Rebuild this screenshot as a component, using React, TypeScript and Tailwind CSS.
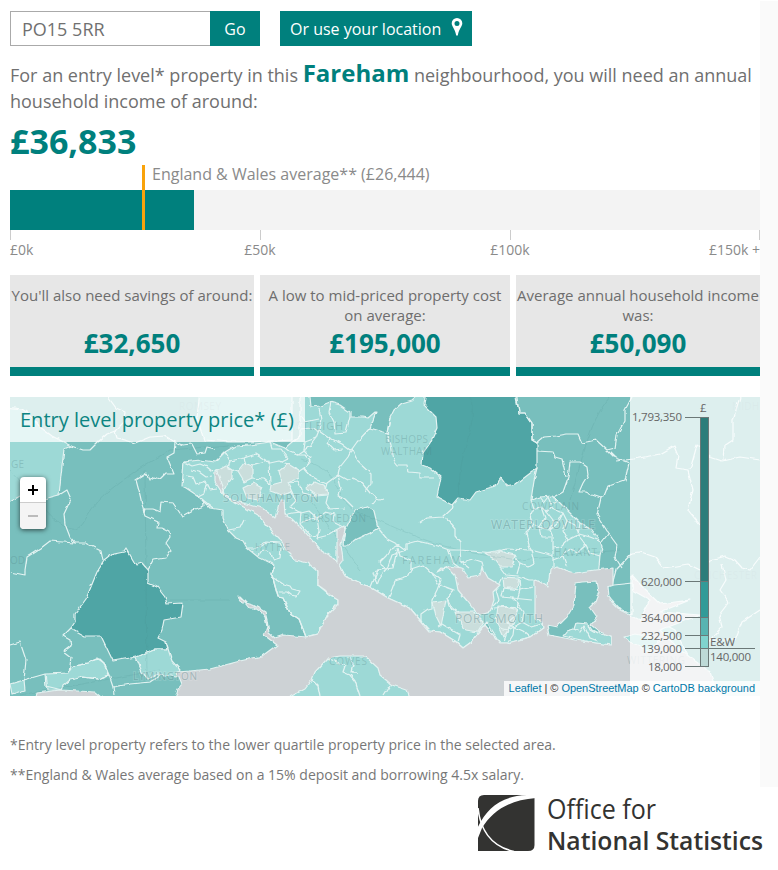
import React from "react";

const MID = "#78bfbd";
const LIGHT = "#9dd9d6";
const DARK = "#4fa5a5";
const SEA = "#cdd2d5";
const PALE = "#cadedc";

type Shape = { fill: string; points: string };

const land: Shape[] = [
  { fill: LIGHT, points: "5,505 20,496 40,500 59,495 61,475 64,449 71,446 52,436 40,427 30,415 22,409 5,407" },
  { fill: LIGHT, points: "300,390 310,397 311,407 320,406 330,402 340,405 350,412 350,417 363,417 368,418 375,412 376,412 370,428 387,433 390,418 394,410 402,403 412,400 424,390 450,390 450,470 537,468 534,480 531,500 540,497 552,496 555,498 565,508 580,523 592,530 600,540 602,548 600,555 598,578 540,590 543,628 530,637 508,643 500,643 487,622 470,643 463,648 455,641 440,632 429,631 410,608 388,598 370,587 345,576 338,565 318,572 318,585 330,595 338,600 338,604 327,616 318,634 306,637 299,619 290,613 283,598 278,597 272,575 275,565 258,557 247,548 243,541 236,538 228,530 223,518 223,510 210,508 198,496 186,488 182,486 184,462 200,460 215,462 225,452 235,446 250,445 270,442 285,448 292,442 300,436" },
  { fill: LIGHT, points: "204,440 197,418 200,390 292,390 292,440 275,441 250,442 230,442" },
  { fill: DARK, points: "426,390 424,405 436,417 437,428 430,443 423,453 422,465 430,468 441,477 437,497 452,505 458,498 470,500 476,492 495,486 501,478 507,486 516,484 537,468 537,443 532,440 532,423 525,413 519,413 516,390" },
  { fill: DARK, points: "126,548 136,565 142,563 148,570 148,583 157,587 165,597 167,604 183,603 181,617 164,620 162,630 158,638 166,642 168,649 155,649 136,657 113,661 101,636 85,636 71,628 75,622 75,614 86,599 97,572 104,561 114,553 124,551" },
  { fill: MID, points: "343,545 345,530 349,522 355,510 366,506 374,511 378,528 370,533 357,539 349,545" },
  { fill: LIGHT, points: "136,657 155,649 168,649 172,661 180,670 176,677 165,675 158,674 148,679 142,672" },
  { fill: LIGHT, points: "46,674 68,673 73,666 88,663 97,658 104,663 109,675 98,679 84,677 70,680 63,686 61,690 48,690" },
  { fill: LIGHT, points: "10,684 24,680 25,690 12,694" },
  { fill: LIGHT, points: "630,627 650,617 675,630 690,660 720,696 690,680 660,665 640,655" },
];

const water: Shape[] = [
  { fill: SEA, points: "174,702 178,689 182,684 177,672 190,671 210,669 240,661 262,656 277,645 264,635 267,627 265,617 261,612 255,608 249,608 245,603 242,603 238,597 240,597 246,603 253,605 260,609 265,612 267,620 269,633 275,638 284,635 306,637 318,634 327,616 338,604 338,600 330,595 325,590 318,585 318,572 308,563 295,560 287,552 282,542 272,532 258,515 240,505 225,497 215,482 215,470 219,476 224,494 232,500 250,505 262,508 275,518 280,500 284,500 285,515 292,519 305,532 320,550 333,558 337,562 337,543 337,530 344,526 345,530 341,545 343,560 339,565 345,576 370,587 388,598 410,608 429,631 440,632 455,641 463,648 470,643 485,625 500,643 508,643 530,637 543,628 542,622 535,618 535,580 540,582 548,587 550,570 557,567 565,570 575,573 595,570 613,568 613,584 610,600 620,610 640,620 650,600 632,590 632,575 645,590 660,604 690,600 660,612 700,615 660,630 680,650 710,672 720,702" },
  { fill: SEA, points: "437,572 441,568 449,569 455,575 458,590 468,602 474,610 480,615 490,612 494,600 493,592 500,585 488,578 482,567 480,575 468,577 462,568 450,566" },
  { fill: SEA, points: "35,702 37,693 60,690 95,692 107,702" },
];

const islands: Shape[] = [
  { fill: LIGHT, points: "280,702 305,689 312,680 315,672 328,658 340,656 365,656 378,668 380,675 392,685 407,690 412,702" },
  { fill: MID, points: "576,583 582,582 597,581 599,592 595,602 590,607 597,617 591,625 600,632 611,636 611,645 575,640 549,635 547,625 557,627 567,617 574,605" },
  { fill: LIGHT, points: "563,636 567,631 574,629 576,623 588,624 592,630 600,634 611,636 611,645 590,642" },
  { fill: MID, points: "608,587 614,585 632,583 632,614 621,610 612,600 609,596" },
  { fill: LIGHT, points: "624,637 635,634 660,640 650,652 630,642" },
];

const pale: Shape[] = [
  { fill: PALE, points: "217,471 226,466 232,470 232,478 225,488 222,493 217,482" },
  { fill: PALE, points: "238,472 245,463 252,466 252,478 244,482" },
  { fill: PALE, points: "279,471 288,464 298,470 298,478 288,483 292,492 282,495 270,491 271,485 282,482" },
  { fill: PALE, points: "306,488 314,482 324,485 328,494 316,495" },
  { fill: PALE, points: "243,488 253,483 262,488 258,500 247,498" },
  { fill: PALE, points: "433,603 446,601 441,626 436,616" },
  { fill: PALE, points: "485,553 500,550 506,553 515,555 512,567 500,567 495,560" },
  { fill: PALE, points: "455,612 474,612 484,622 478,632 466,630 458,619" },
  { fill: PALE, points: "503,577 519,578 517,588 504,588" },
  { fill: PALE, points: "498,606 518,608 513,624 503,637 496,622" },
];

const borders = [
  "71,446 83,450 90,450 98,442 107,434 115,431 117,438 125,440 135,443 150,437 165,436 175,442 174,453 167,457 174,474 165,474 160,479 155,477 150,480 147,473 136,480 140,495 144,513",
  "175,442 182,445 192,444 197,454 205,453 207,447 215,449",
  "108,397 116,408 125,412 124,422 115,431",
  "144,513 145,509 152,509 160,512 161,502 173,503 182,516 193,510 204,506 203,500 213,508",
  "144,513 145,516 158,522 157,528 163,528 169,531 170,537 166,543 171,550 166,558 153,560 148,570",
  "59,495 67,490 71,499 64,514 65,524 70,537 75,543 50,541 41,548 27,557 25,570 25,575 10,572",
  "75,543 85,543 101,551 103,561",
  "10,645 20,642 26,660 24,680 45,674 46,686 62,690",
  "71,628 63,636 70,640 71,646 63,652 71,658 69,673",
  "73,666 80,665 88,663 93,660 100,659 104,663 108,675 98,679 82,677",
  "109,675 113,687 130,684 150,682 160,675",
  "113,687 114,694",
  "275,565 272,575 278,597 283,598 290,613 299,619 306,637",
  "271,577 277,580 283,584 290,586 292,589 300,591 297,596 291,595 287,592 279,592",
  "258,557 263,550 271,553 273,560 280,558 281,548",
  "247,548 256,548 265,542 280,543 284,550",
  "228,530 240,528 244,520",
  "184,462 192,466 200,464 207,467 213,472",
  "186,476 193,477 196,484 205,481 209,489 217,488",
  "190,470 199,472 206,477 212,476",
  "198,496 204,493 206,485",
  "225,452 230,461 244,458 256,454 270,463 279,461 288,464",
  "230,461 228,469 238,472",
  "244,458 246,464",
  "270,442 272,449 281,449 288,458 280,462",
  "252,466 269,461 270,484",
  "252,478 264,479 270,484",
  "285,448 290,452 297,455 310,446 316,438 319,430 321,419 319,408",
  "297,455 305,455 310,461 304,468 298,472",
  "300,415 305,422 319,419",
  "300,429 312,428 319,432",
  "331,402 329,412 334,422 335,433 346,432 350,417",
  "319,430 330,438 342,444 350,450 352,449 357,442 370,428",
  "316,438 305,442 304,450 312,458",
  "330,438 328,444 334,450 343,449",
  "352,449 348,457 340,467 338,475 327,483 325,490",
  "352,449 358,462 371,474 371,483 365,491",
  "338,475 347,480 353,478 361,482 370,493 377,499 373,504",
  "338,475 341,488 338,495 345,499 353,507",
  "304,468 312,477 317,480 327,484",
  "288,483 298,482 303,493 316,496 328,495",
  "292,492 296,501 290,507 301,513 309,511 317,518",
  "284,515 293,513 301,512 300,524 311,536 318,535",
  "300,524 309,519 317,518 319,531 317,538",
  "317,518 326,512 334,514 333,522 345,528",
  "328,495 326,503 330,509 345,508",
  "317,538 329,535 337,530",
  "390,418 387,433 391,445 394,460 398,465 407,465 408,472 420,473 420,478 434,478",
  "376,499 380,500 383,499",
  "378,528 387,539 399,545 406,550",
  "406,550 406,544 417,541 430,544 438,546 449,550 460,550",
  "420,523 427,518 443,517 453,508 452,505",
  "443,517 450,522 455,528 455,536 460,542 460,550 495,553 506,549 531,550 553,556",
  "399,545 390,550 386,556 380,562 385,569 373,572 377,585",
  "377,585 380,577 388,567 392,555 406,550",
  "371,587 378,570 393,568 397,550",
  "388,598 392,589 395,581 407,577 411,569 411,560 400,556 398,548",
  "411,569 423,565 432,573 441,580 437,590 432,600 432,608 428,609 421,614 421,622 429,630",
  "432,573 438,584 454,590 447,598 453,610",
  "438,626 442,624 460,635 458,642",
  "447,598 449,606 458,612",
  "460,550 461,562 469,568",
  "449,550 453,563 460,568",
  "461,562 473,559 482,562 484,570",
  "531,500 534,508 530,516 533,526 526,532 528,542 531,550",
  "534,508 541,507 546,511 552,508 563,513 558,523 550,530 542,529 535,525",
  "540,497 544,502 548,497 551,504 556,502 555,498",
  "541,507 545,518 540,527 542,537 553,537",
  "546,511 553,520 550,530 553,537 553,556 553,568",
  "563,513 567,521 563,531 568,540 578,535 580,523",
  "567,521 575,525 579,534 590,537 600,541",
  "568,540 561,547 553,548",
  "578,535 586,545 590,553 600,556",
  "586,545 578,552 570,549 563,556 567,567",
  "563,556 553,560",
  "500,567 506,575 518,576 529,580 534,580",
  "515,555 520,564 527,567 534,563 531,550",
  "520,564 517,574",
  "502,577 496,590 499,600 493,606",
  "503,588 520,590 533,587",
  "503,588 501,597 512,598 518,604 516,615",
  "519,578 520,590 517,600",
  "512,598 532,600",
  "518,604 524,612 522,622 531,627 542,624",
  "516,615 507,623 514,627 522,622",
  "495,618 500,628 508,630 514,627 513,635 508,643",
  "508,630 504,641",
  "514,627 523,631 530,637",
  "494,608 507,607 514,609",
  "516,397 519,413 525,413 532,423 532,440 537,443 544,437 556,436 567,434 578,434 582,443 596,440 607,450 614,457 629,463 625,480 608,486 604,496 601,498 592,495 586,492 579,492 583,483 588,475 587,467 580,462 570,462 568,478 563,492 553,498",
  "537,451 553,452 555,457 562,459 565,472 566,478",
  "607,450 615,448 617,435 625,420 625,410 632,397",
  "616,461 634,459 660,454 674,446 678,456 676,468 688,470 693,490 688,510 700,525",
  "601,498 597,515 609,534 617,545 615,557 622,568",
  "602,542 608,534",
  "612,585 616,570 632,553 640,552 655,557 664,568 688,564 700,570",
  "690,470 697,445 710,457 722,461 740,457 760,460",
  "723,460 724,446 733,440 733,420 740,397",
  "700,570 710,560 725,556 735,560 742,568 750,570 760,557",
  "722,565 726,580 720,590 729,602 719,615 722,627 710,640",
  "710,640 735,640 742,622 760,610",
  "588,625 590,630 597,634",
  "574,629 580,632 584,626 590,638 598,641",
  "312,680 318,686 320,696",
  "327,658 337,662 345,666 343,672 350,675 355,681 360,696",
  "350,657 353,665 351,672 358,672",
  "390,685 383,696",
];

const roads = "M10,470 C40,500 70,550 85,520 S145,465 170,450 L230,445 M145,470 L147,680 M300,460 C350,470 325,500 365,515 S430,550 520,560 L620,550 M170,600 L230,600 M470,397 C480,430 455,450 460,500 M570,500 C585,450 590,420 610,397 M310,500 L360,570 M20,695 L160,670 M360,660 L350,696";

const labels: { t: string; x: number; y: number; s: number; w: number; strong?: boolean }[] = [
  { t: "ROMSEY", x: 179, y: 410, s: 10, w: 42 },
  { t: "EASTLEIGH", x: 281, y: 430, s: 11, w: 62 },
  { t: "BISHOPS", x: 385, y: 443, s: 10, w: 43 },
  { t: "WALTHAM", x: 381, y: 455, s: 10, w: 51 },
  { t: "GE", x: 11, y: 468, s: 10, w: 13 },
  { t: "OD", x: 10, y: 564, s: 10, w: 15 },
  { t: "SOUTHAMPTON", x: 223, y: 502, s: 11.5, w: 96, strong: true },
  { t: "BURSLEDON", x: 303, y: 522, s: 10, w: 63 },
  { t: "HYTHE", x: 255, y: 551, s: 10, w: 35 },
  { t: "COWPLAIN", x: 522, y: 510, s: 10, w: 57 },
  { t: "WATERLOOVILLE", x: 491, y: 529, s: 12, w: 104, strong: true },
  { t: "FAREHAM", x: 402, y: 564, s: 11, w: 59 },
  { t: "HAVANT", x: 554, y: 556, s: 10, w: 43 },
  { t: "PORTSMOUTH", x: 455, y: 623, s: 12, w: 88, strong: true },
  { t: "LYMINGTON", x: 133, y: 680, s: 10, w: 64, strong: true },
  { t: "COWES", x: 329, y: 665, s: 10, w: 38 },
  { t: "WITTERING", x: 627, y: 664, s: 10, w: 58 },
  { t: "MIDH", x: 732, y: 410, s: 10, w: 27 },
  { t: "CHICHESTER", x: 694, y: 579, s: 10, w: 63 },
];

function Polys({ items }: { items: Shape[] }) {
  return (
    <>
      {items.map((p, i) => (
        <polygon key={i} points={p.points} fill={p.fill} stroke="#e3f2f1" strokeWidth="1.2" strokeLinejoin="round" />
      ))}
    </>
  );
}

function AreaMap() {
  return (
    <svg viewBox="10 397 750 299" className="block h-[299px] w-[750px]">
      <defs>
        <filter id="coast" filterUnits="userSpaceOnUse" x="0" y="387" width="770" height="319" colorInterpolationFilters="sRGB">
          <feTurbulence type="fractalNoise" baseFrequency="0.16" numOctaves="1" seed="4" />
          <feDisplacementMap in="SourceGraphic" scale="4" xChannelSelector="R" yChannelSelector="G" />
        </filter>
      </defs>
      <rect x="10" y="397" width="750" height="299" fill={MID} />
      <g filter="url(#coast)">
        <Polys items={land} />
        <Polys items={pale} />
        <path d={roads} fill="none" stroke="#4c8f90" strokeOpacity="0.16" strokeWidth="1" />
        {borders.map((b, i) => (
          <polyline key={i} points={b} fill="none" stroke="#e3f3f2" strokeWidth="1.2" strokeLinejoin="round" />
        ))}
        <Polys items={water} />
        <Polys items={islands} />
        {borders.slice(-6).map((b, i) => (
          <polyline key={i} points={b} fill="none" stroke="#e3f3f2" strokeWidth="1.3" strokeLinejoin="round" />
        ))}
      </g>
      <g fontFamily="'Open Sans', sans-serif" fill="#4e7d80">
        {labels.map((l) => (
          <text
            key={l.t}
            x={l.x}
            y={l.y}
            fontSize={l.s}
            textLength={l.w}
            fillOpacity={l.strong ? 0.4 : 0.28}
            stroke="#fff"
            strokeWidth="2"
            strokeOpacity={l.strong ? 0.15 : 0}
            paintOrder="stroke"
          >
            {l.t}
          </text>
        ))}
      </g>
    </svg>
  );
}

const legendStops = [
  { v: "1,793,350", y: 417 },
  { v: "620,000", y: 582 },
  { v: "364,000", y: 618 },
  { v: "232,500", y: 636 },
  { v: "139,000", y: 649 },
  { v: "18,000", y: 667 },
];
const legendFills = ["#2d7d7a", "#329b98", "#58b4b1", "#80d3ce", "#bddad7"];

function Legend() {
  return (
    <svg viewBox="630 397 130 299" className="h-[299px] w-[130px]" fontFamily="'Open Sans', sans-serif" fontSize="11.5" fill="#666">
      {legendFills.map((f, i) => (
        <rect key={f} x="701" y={legendStops[i].y} width="8" height={legendStops[i + 1].y - legendStops[i].y} fill={f} />
      ))}
      <rect x="700.5" y="417.5" width="8" height="249" fill="none" stroke="#6b7877" />
      {legendStops.map((s) => (
        <g key={s.v}>
          <path d={`M685,${s.y - 0.5 + (s.y === 417 ? 1 : 0)} H709`} stroke="#6b7877" />
          <text x="682" y={s.y + 4} textAnchor="end" textLength={s.v.length === 9 ? 50 : s.v.length === 7 ? 41 : 34}>{s.v}</text>
        </g>
      ))}
      <path d="M700,648.5 H755" stroke="#6b7877" />
      <text x="700" y="412">£</text>
      <text x="710" y="646" textLength="25">E&amp;W</text>
      <text x="710" y="661" textLength="41">140,000</text>
    </svg>
  );
}

function Card({ label, value, w }: { label: string; value: string; w: string }) {
  return (
    <div className={`${w} flex h-[101px] flex-col border-b-[9px] border-[#00807d] bg-[#e7e7e7] pt-[10px] text-center`}>
      <div className="h-[41px] text-[15px] leading-5 text-[#6e6e6e]">{label}</div>
      <div className="text-[26px] leading-[34px] font-bold text-[#00807d]">{value}</div>
    </div>
  );
}

export default function App() {
  return (
    <div className="h-[870px] w-[778px] overflow-hidden bg-white font-['Open_Sans',sans-serif] text-[#707070]">
      <div className="flex h-[787px] pt-px">
        <main className="w-[760px] pt-[10px] pl-[10px]">
          <div className="flex h-[35px] text-[16px]">
            <div className="flex w-[200px] items-center border border-r-0 border-[#aaa] pt-px pl-[11px] text-[18px]">PO15 5RR</div>
            <button className="w-[50px] bg-[#00807d] font-medium text-white">Go</button>
            <button className="ml-5 flex w-[192px] items-center bg-[#00807d] pl-[10px] font-medium whitespace-nowrap text-white">
              <span className="w-[151px] text-left">Or use your location</span>
              <svg viewBox="0 0 12 18" className="mb-1 ml-[10px] h-[18px] w-3 shrink-0" fill="white">
                <path fillRule="evenodd" d="M6 0a5.3 5.3 0 0 0-5.3 5.300C.7 8.400 4 10.700 5.200 17.500h1.600C8 10.700 11.300 8.400 11.300 5.300A5.300 5.300 0 0 0 6 0zm0 2.900a2.500 2.500 0 1 1 0 5a2.500 2.500 0 0 1 0-5z" />
              </svg>
            </button>
          </div>
          <p className="mt-[14px] h-[54px] text-[18px] leading-[26px] whitespace-nowrap">
            For an entry level* property in this <b className="text-[24px] leading-[26px] text-[#00807d]">Fareham</b> neighbourhood, you will need an annual
            <br />
            household income of around:
          </p>
          <div className="mt-[7px] h-[44px] text-[34px] leading-[40px] font-bold text-[#00807d]">£36,833</div>
          <div className="relative h-[65px]">
            <div className="h-[25px] pl-[142px] text-[16px] leading-[18px] text-[#8a8a8a]">England &amp; Wales average** (£26,444)</div>
            <div className="h-10 bg-[#f3f3f3]">
              <div className="h-10 w-[184px] bg-[#00807d]" />
            </div>
            <div className="absolute top-0 left-[132px] h-[65px] w-[3px] bg-[#f9a30b]" />
          </div>
          <div className="relative flex h-[45px] pt-[9px] text-[14px] leading-[22px] text-[#8a8a8a]">
            <span className="w-[200px]">£0k</span>
            <span className="w-[100px] text-center">£50k</span>
            <span className="ml-[150px] w-[100px] text-center">£100k</span>
            <span className="ml-auto whitespace-nowrap">£150k +</span>
            <i className="absolute top-0 left-0 h-[10px] w-px bg-[#ccc]" />
            <i className="absolute top-0 left-[250px] h-[10px] w-px bg-[#ccc]" />
            <i className="absolute top-0 left-[500px] h-[10px] w-px bg-[#ccc]" />
            <i className="absolute top-0 right-0 h-[10px] w-px bg-[#ccc]" />
          </div>
          <div className="flex gap-[6px]">
            <Card w="w-[244px]" label="You'll also need savings of around:" value="£32,650" />
            <Card w="w-[250px]" label="A low to mid-priced property cost on average:" value="£195,000" />
            <Card w="w-[244px]" label="Average annual household income was:" value="£50,090" />
          </div>
          <div className="relative mt-[21px] h-[299px] w-[750px] overflow-hidden">
            <AreaMap />
            <div className="absolute top-0 left-0 h-[45px] w-[295px] bg-white/75 pl-[10px] text-[20px] leading-[46px] whitespace-nowrap text-[#0c8582]">Entry level property price* (£)</div>
            <div className="absolute top-0 right-0 bg-white/75">
              <Legend />
            </div>
            <div className="absolute top-[80px] left-[10px] h-[52px] w-[26px] overflow-hidden rounded-[4px] bg-white shadow-[0_1px_5px_rgba(0,0,0,0.65)]">
              <div className="flex h-[26px] items-center justify-center border-b border-[#ccc]">
                <svg viewBox="0 0 10 10" className="size-[10px]"><path d="M0 5H10M5 0V10" stroke="#000" strokeWidth="2" /></svg>
              </div>
              <div className="flex h-[26px] items-center justify-center bg-[#f4f4f4]">
                <svg viewBox="0 0 10 10" className="size-[10px]"><path d="M0 5H10" stroke="#bbb" strokeWidth="2" /></svg>
              </div>
            </div>
            <div className="absolute right-0 bottom-0 h-[15px] bg-white/80 px-[5px] font-['Liberation_Sans',sans-serif] text-[11px] leading-[15px] tracking-[-0.03px] whitespace-nowrap text-[#333]">
              <span className="text-[#0078a8]">Leaflet</span> | © <span className="text-[#0078a8]">OpenStreetMap</span> © <span className="text-[#0078a8]">CartoDB background</span>
            </div>
          </div>
          <div className="pt-[34px] text-[14px] leading-[30px] whitespace-nowrap text-[#777]">
            <p>*Entry level property refers to the lower quartile property price in the selected area.</p>
            <p>**England &amp; Wales average based on a 15% deposit and borrowing 4.5x salary.</p>
          </div>
        </main>
        <div className="flex-1 bg-[#fafafa]" />
      </div>
      <div className="flex justify-end">
        <svg viewBox="478 787 300 83" className="h-[83px] w-[300px]" fill="#333331">
          <path d="M484,795 H527 L534.500,798 V845 Q534.500,851 528,851 H478 V801 Q478,795 484,795Z" />
          <path d="M477,829 C486,809 500,796 527,795 L527,794 H536 V798 C508,800 492,812 482,828 L478,838Z" fill="#fff" />
          <path d="M478,808 C480,828 490,846 514,851.500" fill="none" stroke="#fff" strokeWidth="1.600" />
          <g fontFamily="'Open Sans', sans-serif">
            <text x="547" y="819" fontSize="27" textLength="109" lengthAdjust="spacingAndGlyphs">Office for</text>
            <text x="547" y="849.500" fontSize="26" fontWeight="600" textLength="216" lengthAdjust="spacingAndGlyphs">National Statistics</text>
          </g>
        </svg>
      </div>
    </div>
  );
}
